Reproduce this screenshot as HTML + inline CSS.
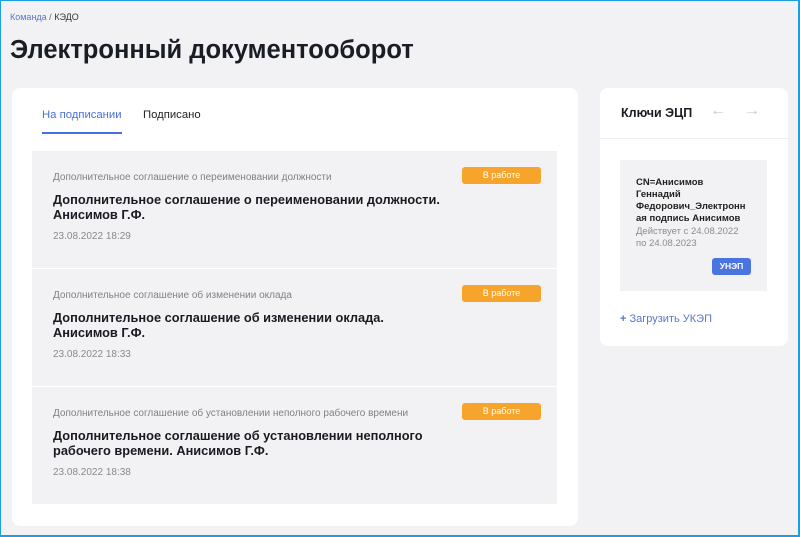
<!DOCTYPE html>
<html><head><meta charset="utf-8"><style>
*{box-sizing:border-box;margin:0;padding:0}
body{width:800px;height:537px;background:#f2f2f4;font-family:"Liberation Sans",sans-serif;position:relative;overflow:hidden}
.frame{position:absolute;left:0;top:0;width:800px;height:537px;border:1px solid #1aa0dc;border-right:2px solid #1aa0dc;border-bottom:2px solid #1aa0dc;z-index:5}
.a{position:absolute;white-space:nowrap}
.card{position:absolute;background:#fff;border-radius:8px}
.item{position:absolute;left:32px;width:525px;height:117px;background:#f2f2f4}
.small{position:absolute;left:21px;top:21px;font-size:10px;color:#808088}
.title{position:absolute;left:21px;top:41px;font-size:12.8px;font-weight:bold;color:#1a1a22;line-height:15px}
.date{position:absolute;left:21px;font-size:10px;color:#888890}
.badge{position:absolute;left:430px;top:16px;width:79px;height:17px;background:#f7a42c;border-radius:3px;color:#fff;font-size:9px;text-align:center;line-height:17px}
</style></head><body>
<div class="frame"></div>
<div class="a" style="left:10px;top:12px;font-size:9px;color:#5b76c8">Команда <span style="color:#666">/</span> <span style="color:#333">КЭДО</span></div>
<div class="a" style="left:10px;top:36px;font-size:25.5px;font-weight:bold;color:#1a1d26">Электронный документооборот</div>
<div class="card" style="left:12px;top:88px;width:566px;height:438px"></div>
<div class="a" style="left:42px;top:109px;font-size:11.3px;color:#4a6fd8">На подписании</div>
<div class="a" style="left:42px;top:132px;width:80px;height:2px;background:#4a6fd8"></div>
<div class="a" style="left:143px;top:109px;font-size:11.3px;color:#222">Подписано</div>
<div class="item" style="top:151px"><div class="small">Дополнительное соглашение о переименовании должности</div><div class="badge">В работе</div><div class="title">Дополнительное соглашение о переименовании должности.<br>Анисимов Г.Ф.</div><div class="date" style="top:80px">23.08.2022 18:29</div></div>
<div class="item" style="top:269px"><div class="small">Дополнительное соглашение об изменении оклада</div><div class="badge">В работе</div><div class="title">Дополнительное соглашение об изменении оклада.<br>Анисимов Г.Ф.</div><div class="date" style="top:80px">23.08.2022 18:33</div></div>
<div class="item" style="top:387px"><div class="small">Дополнительное соглашение об установлении неполного рабочего времени</div><div class="badge">В работе</div><div class="title">Дополнительное соглашение об установлении неполного<br>рабочего времени. Анисимов Г.Ф.</div><div class="date" style="top:80px">23.08.2022 18:38</div></div>
<div class="card" style="left:600px;top:88px;width:188px;height:258px"></div>
<div class="a" style="left:621px;top:106px;font-size:12.5px;font-weight:bold;color:#1a1a22">Ключи ЭЦП</div>
<div class="a" style="left:710px;top:102px;font-size:16px;color:#c8c8d0">←</div>
<div class="a" style="left:744px;top:102px;font-size:16px;color:#c8c8d0">→</div>
<div class="a" style="left:600px;top:138px;width:188px;height:1px;background:#ececef"></div>
<div class="a" style="left:620px;top:160px;width:147px;height:131px;background:#f2f2f4"></div>
<div class="a" style="left:636px;top:177px;font-size:9.5px;font-weight:bold;color:#222;line-height:12px">CN=Анисимов<br>Геннадий<br>Федорович_Электронн<br>ая подпись Анисимов</div>
<div class="a" style="left:636px;top:226px;font-size:9.5px;color:#8a8a92;line-height:11.5px">Действует с 24.08.2022<br>по 24.08.2023</div>
<div class="a" style="left:712px;top:258px;width:39px;height:17px;background:#4a74e0;border-radius:3px;color:#fff;font-size:8.5px;font-weight:bold;text-align:center;line-height:17px">УНЭП</div>
<div class="a" style="left:620px;top:313px;font-size:11px;color:#5b76c8"><b>+</b> Загрузить УКЭП</div>
</body></html>
